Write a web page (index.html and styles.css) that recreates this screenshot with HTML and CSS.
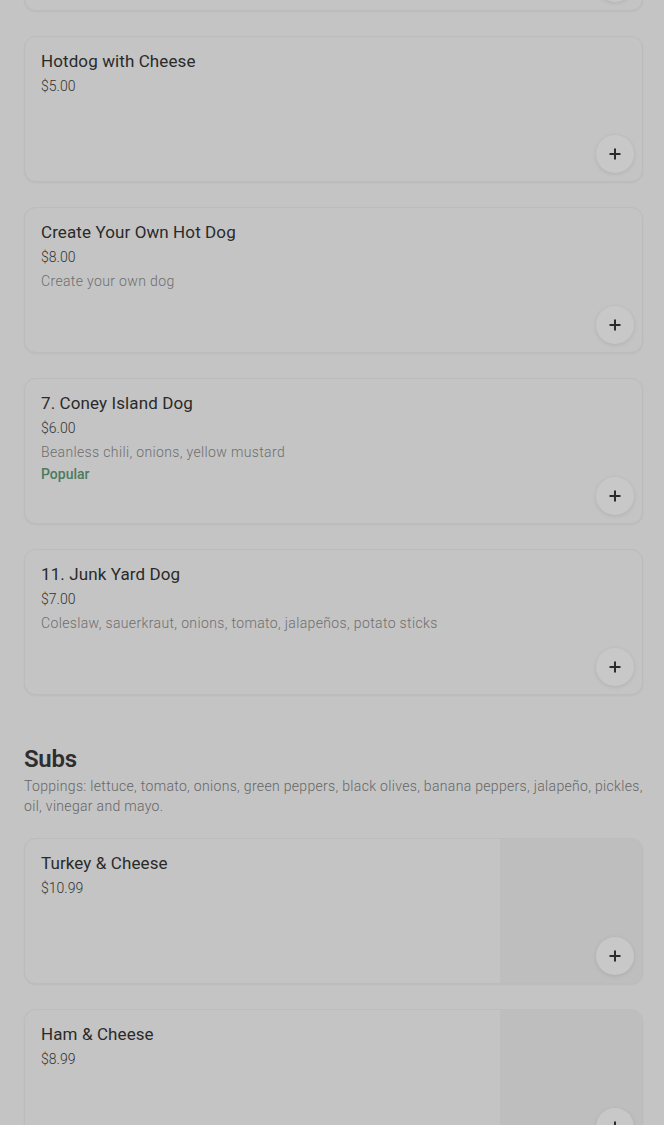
FILE: index.html
```html
<!DOCTYPE html>
<html>
<head>
<meta charset="utf-8">
<link rel="stylesheet" href="styles.css">
</head>
<body>
<main class="page">
  <section class="section first">
    <div class="list">
      <div class="card">
        <div class="info"></div>
        <button class="add" aria-label="Add"><svg viewBox="0 0 16 16" width="16" height="16"><path d="M8 2.5v11M2.5 8h11" stroke="#2b2b2b" stroke-width="2"/></svg></button>
      </div>
      <div class="card">
        <div class="info">
          <div class="title">Hotdog with Cheese</div>
          <div class="price">$5.00</div>
        </div>
        <button class="add" aria-label="Add"><svg viewBox="0 0 16 16" width="16" height="16"><path d="M8 2.5v11M2.5 8h11" stroke="#2b2b2b" stroke-width="2"/></svg></button>
      </div>
      <div class="card">
        <div class="info">
          <div class="title">Create Your Own Hot Dog</div>
          <div class="price">$8.00</div>
          <div class="desc">Create your own dog</div>
        </div>
        <button class="add" aria-label="Add"><svg viewBox="0 0 16 16" width="16" height="16"><path d="M8 2.5v11M2.5 8h11" stroke="#2b2b2b" stroke-width="2"/></svg></button>
      </div>
      <div class="card">
        <div class="info">
          <div class="title">7. Coney Island Dog</div>
          <div class="price">$6.00</div>
          <div class="desc">Beanless chili, onions, yellow mustard</div>
          <div class="tag">Popular</div>
        </div>
        <button class="add" aria-label="Add"><svg viewBox="0 0 16 16" width="16" height="16"><path d="M8 2.5v11M2.5 8h11" stroke="#2b2b2b" stroke-width="2"/></svg></button>
      </div>
      <div class="card">
        <div class="info">
          <div class="title">11. Junk Yard Dog</div>
          <div class="price">$7.00</div>
          <div class="desc">Coleslaw, sauerkraut, onions, tomato, jalapeños, potato sticks</div>
        </div>
        <button class="add" aria-label="Add"><svg viewBox="0 0 16 16" width="16" height="16"><path d="M8 2.5v11M2.5 8h11" stroke="#2b2b2b" stroke-width="2"/></svg></button>
      </div>
    </div>
  </section>

  <section class="section">
    <h2 class="heading">Subs</h2>
    <p class="section-desc">Toppings: lettuce, tomato, onions, green peppers, black olives, banana peppers, jalapeño, pickles, oil, vinegar and mayo.</p>
    <div class="list">
      <div class="card with-image">
        <div class="info">
          <div class="title">Turkey &amp; Cheese</div>
          <div class="price">$10.99</div>
        </div>
        <div class="thumb"></div>
        <button class="add" aria-label="Add"><svg viewBox="0 0 16 16" width="16" height="16"><path d="M8 2.5v11M2.5 8h11" stroke="#2b2b2b" stroke-width="2"/></svg></button>
      </div>
      <div class="card with-image">
        <div class="info">
          <div class="title">Ham &amp; Cheese</div>
          <div class="price">$8.99</div>
        </div>
        <div class="thumb"></div>
        <button class="add" aria-label="Add"><svg viewBox="0 0 16 16" width="16" height="16"><path d="M8 2.5v11M2.5 8h11" stroke="#2b2b2b" stroke-width="2"/></svg></button>
      </div>
    </div>
  </section>
</main>
</body>
</html>
```
FILE: styles.css
```css
* { box-sizing: border-box; }
html, body {
  margin: 0;
  padding: 0;
  background: #c4c4c4;
  font-family: Roboto, "Liberation Sans", Arial, sans-serif;
  overflow: hidden;
}
.page {
  padding: 0 21px 0 24px;
}
.section.first {
  margin-top: -135px;
}
.section + .section {
  margin-top: 48px;
}
.list {
  display: flex;
  flex-direction: column;
  gap: 25px;
}
.card {
  position: relative;
  height: 146px;
  border: 1px solid #bcbcbc;
  border-radius: 12px;
  background: #c4c4c4;
  box-shadow: 0 1px 2px rgba(0,0,0,0.05);
  display: flex;
  overflow: hidden;
}
.info {
  flex: 1;
  padding: 13px 16px;
}
.thumb {
  width: 142px;
  background: #bebebe;
}
.title {
  font-size: 17px;
  line-height: 22px;
  font-weight: 400;
  color: #2a2a2a;
  letter-spacing: 0.1px;
}
.price {
  margin-top: 4px;
  font-size: 14px;
  line-height: 20px;
  font-weight: 300;
  color: #333333;
}
.desc {
  margin-top: 4px;
  font-size: 14px;
  line-height: 20px;
  font-weight: 300;
  color: #6e6e6e;
  letter-spacing: 0.36px;
}
.tag {
  margin-top: 2px;
  font-size: 14px;
  line-height: 20px;
  font-weight: 500;
  color: #4c7a5e;
}
.add {
  position: absolute;
  right: 8px;
  bottom: 8px;
  width: 38px;
  height: 38px;
  border: none;
  border-radius: 50%;
  background: #c8c8c8;
  box-shadow: 0 1px 4px rgba(0,0,0,0.1);
  display: flex;
  align-items: center;
  justify-content: center;
  padding: 0;
}
.heading {
  margin: 0;
  font-size: 24px;
  line-height: 32px;
  font-weight: 600;
  color: #2e2e2e;
  letter-spacing: -0.3px;
}
.section-desc {
  margin: 1px 0 22px;
  font-size: 14px;
  line-height: 20px;
  font-weight: 300;
  color: #666666;
  letter-spacing: 0.32px;
}
```
